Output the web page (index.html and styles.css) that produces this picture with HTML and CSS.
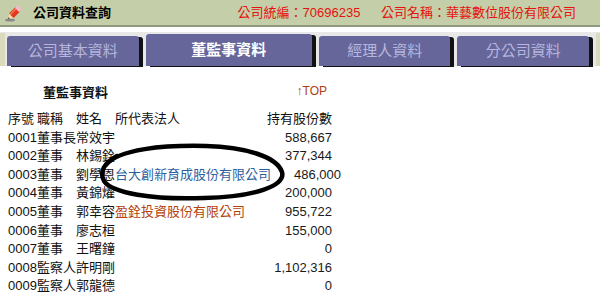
FILE: index.html
```html
<!DOCTYPE html>
<html lang="zh-Hant">
<head>
    <meta charset="UTF-8">
    <title>公司資料查詢</title>
    <link rel="stylesheet" href="styles.css">
</head>
<body>
    <header class="topbar">
        <svg class="pencil" width="20" height="20" viewBox="0 0 20 20">
            <ellipse cx="6" cy="17" rx="5" ry="1.6" fill="#8a8a8a"/>
            <g transform="rotate(-45 10 10)">
                <rect x="6" y="6.8" width="10" height="6.4" rx="1" fill="#e23a22"/>
                <rect x="6" y="7.6" width="10" height="1.6" fill="#f07a4a"/>
                <rect x="14.2" y="6.8" width="3.6" height="6.4" rx="1.2" fill="#f4b8c8"/>
                <polygon points="6,6.8 6,13.2 1.6,10" fill="#f3d9a8"/>
                <polygon points="3,8.9 3,11.1 1.6,10" fill="#333"/>
            </g>
        </svg>
        <h1 class="page-title">公司資料查詢</h1>
        <div class="company-info">
            <span>公司統編：70696235</span>
            <span class="company-name">公司名稱：華藝數位股份有限公司</span>
        </div>
    </header>

    <nav class="tabs">
        <div class="tabs-edge"></div>
        <div class="tab">公司基本資料</div>
        <div class="tab active">董監事資料</div>
        <div class="tab">經理人資料</div>
        <div class="tab">分公司資料</div>
        <div class="tabs-edge right"></div>
    </nav>

    <main class="panel">
        <div class="section-head">
            <span class="section-title">董監事資料</span>
            <a class="top-link">↑TOP</a>
        </div>

        <div class="board">
            <div class="row head">
                <span>序號</span><span>職稱</span><span>姓名</span><span>所代表法人</span><span class="shares">持有股份數</span>
            </div>
            <div class="row">
                <span>0001</span><span>董事長</span><span>常效宇</span><span></span><span class="shares">588,667</span>
            </div>
            <div class="row">
                <span>0002</span><span>董事</span><span>林錫銓</span><span></span><span class="shares">377,344</span>
            </div>
            <div class="row">
                <span>0003</span><span>董事</span><span>劉學恩</span><span class="corp blue">台大創新育成股份有限公司</span><span class="shares">486,000</span>
            </div>
            <div class="row">
                <span>0004</span><span>董事</span><span>黃錦燿</span><span></span><span class="shares">200,000</span>
            </div>
            <div class="row">
                <span>0005</span><span>董事</span><span>郭幸容</span><span class="corp brown">盈銓投資股份有限公司</span><span class="shares">955,722</span>
            </div>
            <div class="row">
                <span>0006</span><span>董事</span><span>廖志桓</span><span></span><span class="shares">155,000</span>
            </div>
            <div class="row">
                <span>0007</span><span>董事</span><span>王曙鐘</span><span></span><span class="shares">0</span>
            </div>
            <div class="row">
                <span>0008</span><span>監察人</span><span>許明剛</span><span></span><span class="shares">1,102,316</span>
            </div>
            <div class="row">
                <span>0009</span><span>監察人</span><span>郭龍德</span><span></span><span class="shares">0</span>
            </div>
        </div>

        <!-- hand drawn mark over row 0003 -->
        <svg class="scribble" width="200" height="66" viewBox="0 0 200 66">
            <path d="M12 26 C24 10, 70 6, 112 7 C152 8, 183 18, 188 33 C192 47, 160 58, 110 59 C58 61, 18 54, 10 42 C5 33, 10 24, 23 17"
                  fill="none" stroke="#000" stroke-width="4.5" stroke-linecap="round"/>
        </svg>
    </main>
</body>
</html>
```

FILE: styles.css
```css
body {
    margin: 0;
    background-color: #ffffff;
    color: #111111;
    font-family: "Liberation Sans", "Noto Sans CJK TC", sans-serif;
    font-size: 13px;
}

/* header bar */
.topbar {
    display: flex;
    align-items: center;
    height: 25px;
    background-color: #c4cea8;
    border-bottom: 2px solid #8e9a80;
    margin-bottom: 5px;
}
.pencil {
    margin-left: 4px;
    margin-right: 9px;
}
.page-title {
    margin: 0;
    font-size: 13px;
    font-weight: bold;
    color: #000000;
    line-height: 25px;
}
.company-info {
    margin-left: auto;
    margin-right: 24px;
    color: #e4120e;
    line-height: 25px;
}
.company-name {
    margin-left: 17px;
}

/* tabs */
.tabs {
    display: flex;
    box-sizing: border-box;
    height: 34px;
    padding-top: 4px;
    background-color: #e8e8e8;
}
.tabs-edge {
    width: 5px;
    margin-top: -3px;
    margin-right: 2px;
    background-color: #dadabc;
}
.tabs-edge.right {
    width: 4px;
    margin-left: auto;
    margin-right: 0;
}
.tab {
    width: 132px;
    margin-right: 7px;
    background-color: #66669a;
    border-radius: 3px 3px 0 0;
    box-shadow: 4px 1px 0 #111111;
    color: #b6b6de;
    font-size: 15px;
    line-height: 29px;
    text-align: center;
}
.tab:first-of-type {
    width: 131px;
}
.tab.active {
    width: 167px;
    margin-top: -2px;
    line-height: 31px;
    color: #ffffff;
    font-weight: bold;
}
.tab:last-of-type {
    margin-right: 0;
}

/* content */
.panel {
    position: relative;
    padding: 18px 0 0 8px;
}
.section-head {
    display: flex;
    width: 324px;
    height: 18px;
    line-height: 18px;
    margin-bottom: 8px;
}
.section-title {
    padding-left: 35px;
    font-weight: bold;
}
.top-link {
    margin-left: auto;
    margin-right: 5px;
    margin-top: -2px;
    color: #b0400e;
    font-size: 12px;
}
.board {
    width: 324px;
}
.row {
    display: grid;
    grid-template-columns: 29px 39px 39px 1fr 70px;
    height: 18.6px;
    line-height: 18.6px;
    white-space: nowrap;
}
.shares {
    text-align: right;
    color: #1a1a1a;
}
.row.head .shares {
    color: #111111;
}
.corp.blue {
    color: #2d5e9e;
}
.corp.brown {
    color: #b4420c;
}
.scribble {
    position: absolute;
    left: 94px;
    top: 73px;
}
```
